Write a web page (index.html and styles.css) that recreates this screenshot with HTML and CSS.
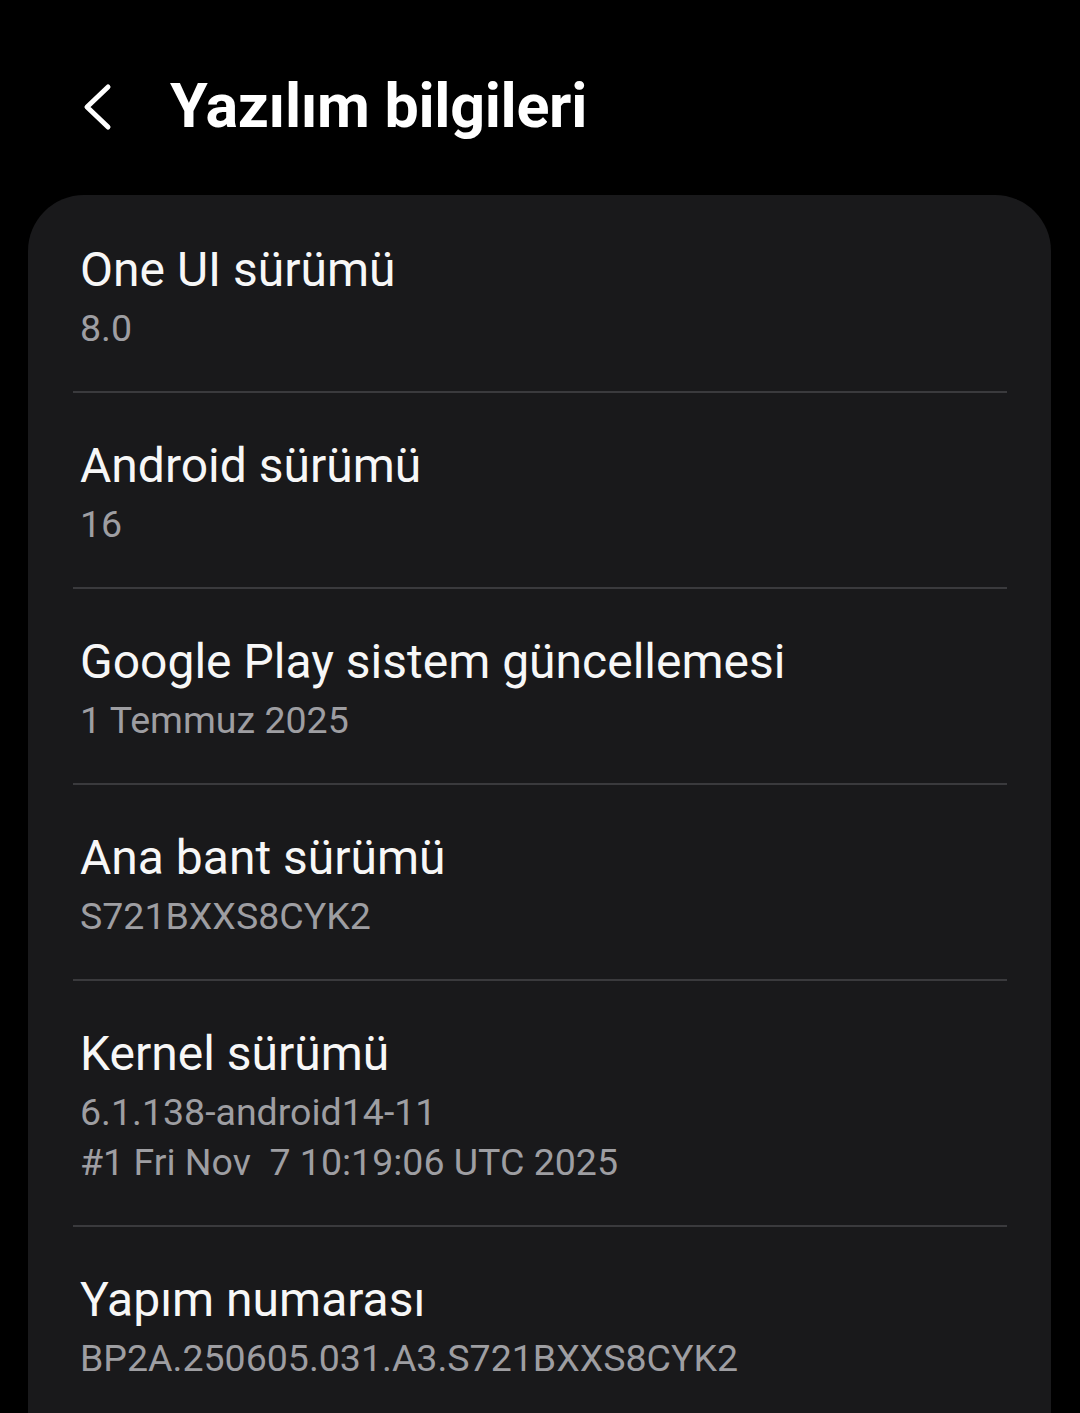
FILE: index.html
```html
<!DOCTYPE html>
<html lang="tr">
<head>
  <meta charset="UTF-8">
  <meta name="viewport" content="width=device-width, initial-scale=1.0">
  <title>Yazılım bilgileri</title>
  <link rel="stylesheet" href="styles.css">
</head>
<body>
  <div class="header">
    <svg class="back" width="40" height="56" viewBox="0 0 40 56">
      <path d="M30 8 L9 28 L30 48" fill="none" stroke="#fff" stroke-width="5" stroke-linecap="round" stroke-linejoin="round"/>
    </svg>
    <h1>Yazılım bilgileri</h1>
  </div>
  <div class="card">
    <div class="item">
      <div class="title">One UI sürümü</div>
      <div class="sub">8.0</div>
    </div>
    <div class="divider"></div>
    <div class="item">
      <div class="title">Android sürümü</div>
      <div class="sub">16</div>
    </div>
    <div class="divider"></div>
    <div class="item">
      <div class="title">Google Play sistem güncellemesi</div>
      <div class="sub">1 Temmuz 2025</div>
    </div>
    <div class="divider"></div>
    <div class="item">
      <div class="title">Ana bant sürümü</div>
      <div class="sub">S721BXXS8CYK2</div>
    </div>
    <div class="divider"></div>
    <div class="item">
      <div class="title">Kernel sürümü</div>
      <div class="sub">6.1.138-android14-11<br>#1 Fri Nov &nbsp;7 10:19:06 UTC 2025</div>
    </div>
    <div class="divider"></div>
    <div class="item">
      <div class="title">Yapım numarası</div>
      <div class="sub">BP2A.250605.031.A3.S721BXXS8CYK2</div>
    </div>
  </div>
</body>
</html>
```

FILE: styles.css
```css
body {
  margin: 0;
  background-color: #000;
  font-family: Roboto, "Noto Sans", sans-serif;
  color: #f7f7f7;
  overflow: hidden;
}
.header {
  display: flex;
  align-items: center;
  height: 195px;
  padding: 16px 0 0 78px;
  box-sizing: border-box;
}
.back {
  margin-right: 52px;
  margin-top: 2px;
}
h1 {
  margin: 0;
  font-size: 61px;
  font-weight: 700;
  letter-spacing: -0.3px;
  color: #fff;
}
.card {
  margin-left: 28px;
  width: 1023px;
  background-color: #19191b;
  border-radius: 56px 56px 0 0;
  padding-top: 2px;
  min-height: 1300px;
}
.item {
  padding: 44px 0 38px 52px;
}
.title {
  font-size: 48px;
  line-height: 58px;
}
.sub {
  margin-top: 4px;
  font-size: 37.5px;
  line-height: 50px;
  color: #9e9ea2;
}
.divider {
  height: 2px;
  margin: 0 44px 0 45px;
  background-color: #3a3a3d;
}
```
